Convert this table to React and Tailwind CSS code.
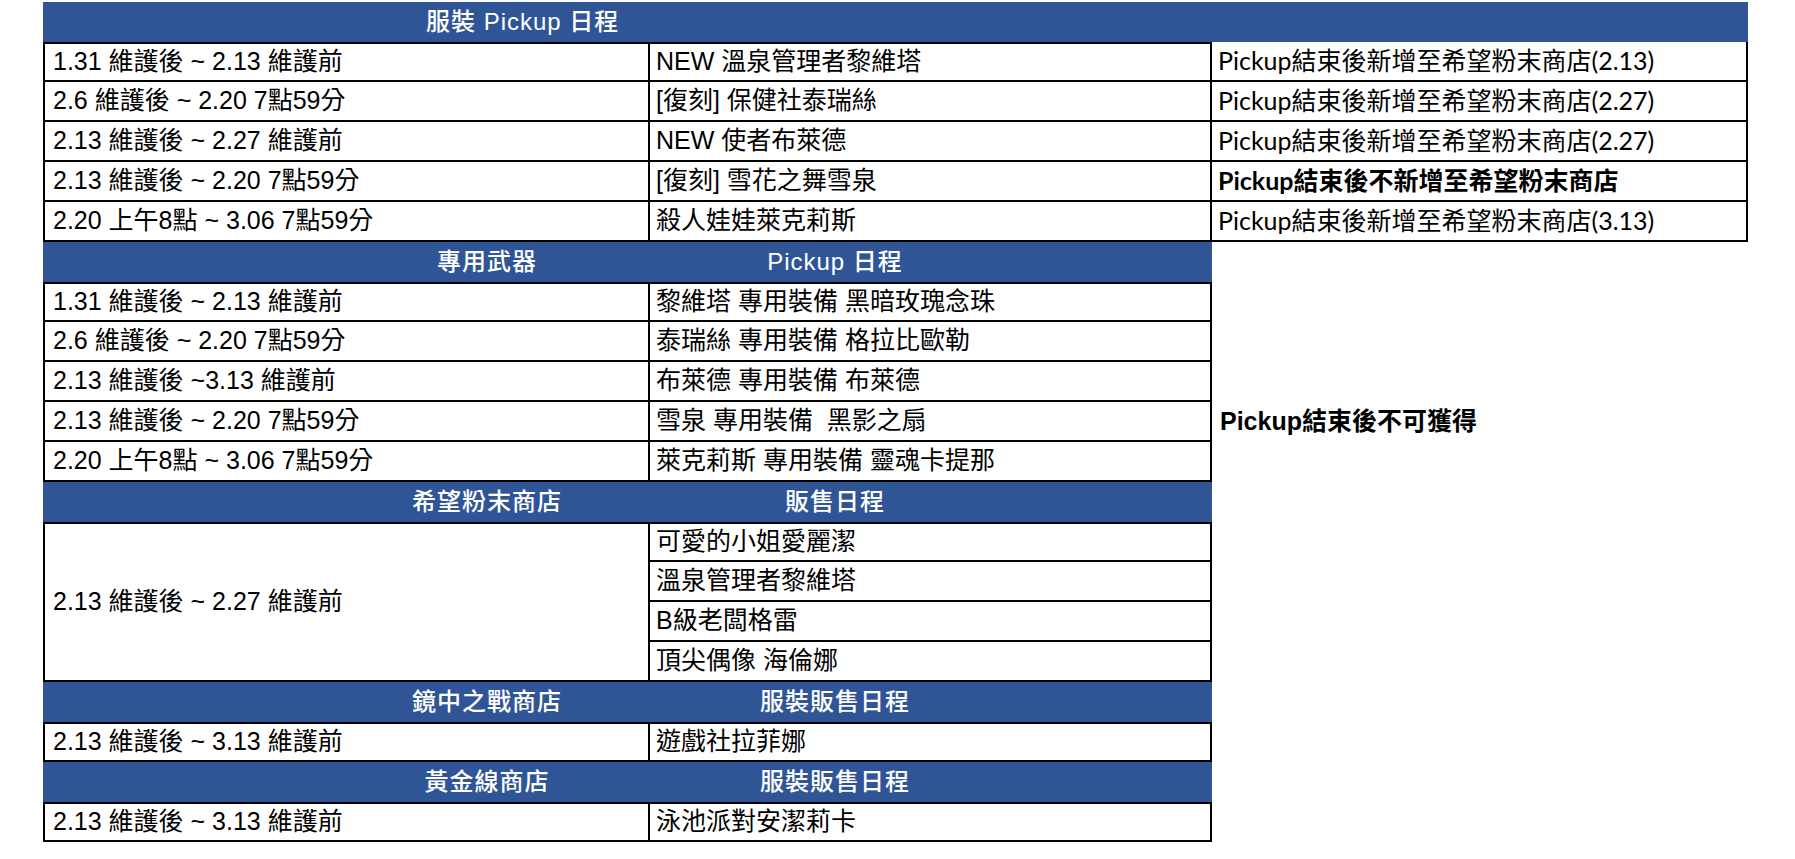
const narrow = "font-['Liberation_Sans_Narrow','Liberation_Sans','Noto_Sans_CJK_TC',sans-serif]";
const calibri = "font-['Lato','Noto_Sans_CJK_TC',sans-serif]";

const costumeRows = [
  ["1.31 維護後 ~ 2.13 維護前", "NEW 溫泉管理者黎維塔", "Pickup結束後新增至希望粉末商店(2.13)"],
  ["2.6 維護後 ~ 2.20 7點59分", "[復刻] 保健社泰瑞絲", "Pickup結束後新增至希望粉末商店(2.27)"],
  ["2.13 維護後 ~ 2.27 維護前", "NEW 使者布萊德", "Pickup結束後新增至希望粉末商店(2.27)"],
  ["2.13 維護後 ~ 2.20 7點59分", "[復刻] 雪花之舞雪泉", "Pickup結束後不新增至希望粉末商店", true],
  ["2.20 上午8點 ~ 3.06 7點59分", "殺人娃娃萊克莉斯", "Pickup結束後新增至希望粉末商店(3.13)"],
];

const weaponRows = [
  ["1.31 維護後 ~ 2.13 維護前", "黎維塔 專用裝備 黑暗玫瑰念珠"],
  ["2.6 維護後 ~ 2.20 7點59分", "泰瑞絲 專用裝備 格拉比歐勒"],
  ["2.13 維護後 ~3.13 維護前", "布萊德 專用裝備 布萊德"],
  ["2.13 維護後 ~ 2.20 7點59分", "雪泉 專用裝備\u00a0\u00a0黑影之扇"],
  ["2.20 上午8點 ~ 3.06 7點59分", "萊克莉斯 專用裝備 靈魂卡提那"],
];

const powderShop = ["可愛的小姐愛麗潔", "溫泉管理者黎維塔", "B級老闆格雷", "頂尖偶像 海倫娜"];

// 左欄 / 中欄 共通樣式
const cellBase = `${narrow} text-[25px] text-black flex items-center whitespace-pre border-black border-r-2 border-b-2`;

function DateCell({ children, top, span }) {
  return (
    <div
      className={`${cellBase} col-start-1 border-l-2 pl-2 ${top ? "border-t-2" : ""} ${span ? "row-span-4" : ""}`}
    >
      {children}
    </div>
  );
}

function ItemCell({ children, top }) {
  return (
    <div className={`${cellBase} col-start-2 pl-[6px] ${top ? "border-t-2" : ""}`}>
      {children}
    </div>
  );
}

function SectionHeader({ left, right }) {
  return (
    <div className={`col-start-1 col-span-2 bg-[#2f5597] text-white flex items-center ${narrow} text-[24px] font-medium tracking-[1px]`}>
      <div className="w-[281px]" />
      <div className="w-[326px] text-center">{left}</div>
      <div className="w-[370px] text-center">{right}</div>
    </div>
  );
}

export default function App() {
  return (
    <div className="min-h-screen bg-white pt-[2px] pl-[43px]">
      <div className="grid grid-cols-[607px_562px_536px] auto-rows-[40px]">
        {/* 服裝 Pickup */}
        <div className={`col-span-3 bg-[#2f5597] text-white flex items-center pl-[383px] ${narrow} text-[24px] font-medium tracking-[1px]`}>
          服裝 Pickup 日程
        </div>
        {costumeRows.map((r, i) => (
          <div key={i} className="contents">
            <DateCell top={i === 0}>{r[0]}</DateCell>
            <ItemCell top={i === 0}>{r[1]}</ItemCell>
            <div
              className={`col-start-3 flex items-center pl-[6px] border-black border-r-2 border-b-2 text-[25px] ${calibri} ${r[3] ? "font-bold" : ""}`}
            >
              {r[2]}
            </div>
          </div>
        ))}

        {/* 專用武器 */}
        <SectionHeader left="專用武器" right="Pickup 日程" />
        <div className="col-start-3 row-start-7 row-span-9 flex items-center pl-2 font-['Liberation_Sans','Noto_Sans_CJK_TC',sans-serif] font-bold text-[25px] text-black">
          Pickup結束後不可獲得
        </div>
        {weaponRows.map((r, i) => (
          <div key={i} className="contents">
            <DateCell top={i === 0}>{r[0]}</DateCell>
            <ItemCell top={i === 0}>{r[1]}</ItemCell>
          </div>
        ))}

        {/* 希望粉末商店 */}
        <SectionHeader left="希望粉末商店" right="販售日程" />
        <DateCell top span>
          2.13 維護後 ~ 2.27 維護前
        </DateCell>
        {powderShop.map((name, i) => (
          <ItemCell key={i} top={i === 0}>
            {name}
          </ItemCell>
        ))}

        {/* 鏡中之戰商店 */}
        <SectionHeader left="鏡中之戰商店" right="服裝販售日程" />
        <DateCell top>2.13 維護後 ~ 3.13 維護前</DateCell>
        <ItemCell top>遊戲社拉菲娜</ItemCell>

        {/* 黃金線商店 */}
        <SectionHeader left="黃金線商店" right="服裝販售日程" />
        <DateCell top>2.13 維護後 ~ 3.13 維護前</DateCell>
        <ItemCell top>泳池派對安潔莉卡</ItemCell>
      </div>
    </div>
  );
}
